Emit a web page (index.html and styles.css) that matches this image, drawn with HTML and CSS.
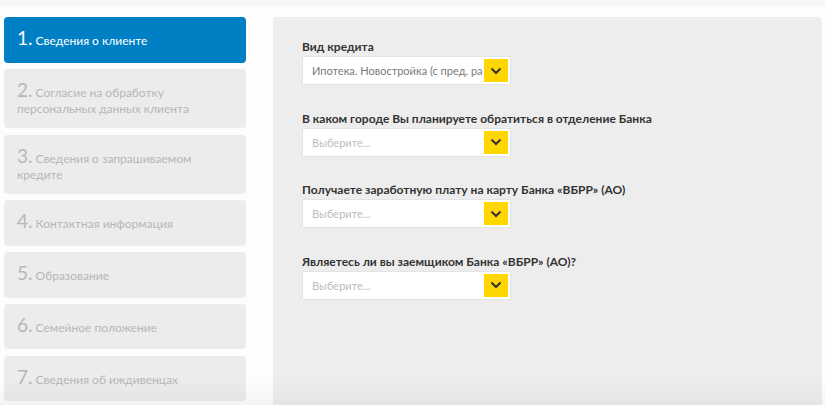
FILE: index.html
```html
<!DOCTYPE html>
<html lang="ru">
<head>
<meta charset="utf-8">
<title>Анкета</title>
<link rel="stylesheet" href="styles.css">
</head>
<body>
<div class="topbar"></div>
<div class="page">
  <nav class="steps">
    <div class="step active"><span class="num">1.</span> Сведения о клиенте</div>
    <div class="step two"><span class="num">2.</span> Согласие на обработку персональных данных клиента</div>
    <div class="step two"><span class="num">3.</span> Сведения о запрашиваемом кредите</div>
    <div class="step"><span class="num">4.</span> Контактная информация</div>
    <div class="step"><span class="num">5.</span> Образование</div>
    <div class="step"><span class="num">6.</span> Семейное положение</div>
    <div class="step"><span class="num">7.</span> Сведения об иждивенцах</div>
  </nav>
  <main class="panel">
    <div class="field">
      <div class="label">Вид кредита</div>
      <div class="select"><span class="value">Ипотека. Новостройка (с пред. расчетами)</span><span class="arrow"><svg width="12" height="8" viewBox="0 0 12 8"><path d="M1.5 1.5 L6 6 L10.5 1.5" fill="none" stroke="#333" stroke-width="2"/></svg></span></div>
    </div>
    <div class="field">
      <div class="label">В каком городе Вы планируете обратиться в отделение Банка</div>
      <div class="select"><span class="value placeholder">Выберите...</span><span class="arrow"><svg width="12" height="8" viewBox="0 0 12 8"><path d="M1.5 1.5 L6 6 L10.5 1.5" fill="none" stroke="#333" stroke-width="2"/></svg></span></div>
    </div>
    <div class="field">
      <div class="label">Получаете заработную плату на карту Банка «ВБРР» (АО)</div>
      <div class="select"><span class="value placeholder">Выберите...</span><span class="arrow"><svg width="12" height="8" viewBox="0 0 12 8"><path d="M1.5 1.5 L6 6 L10.5 1.5" fill="none" stroke="#333" stroke-width="2"/></svg></span></div>
    </div>
    <div class="field">
      <div class="label">Являетесь ли вы заемщиком Банка «ВБРР» (АО)?</div>
      <div class="select"><span class="value placeholder">Выберите...</span><span class="arrow"><svg width="12" height="8" viewBox="0 0 12 8"><path d="M1.5 1.5 L6 6 L10.5 1.5" fill="none" stroke="#333" stroke-width="2"/></svg></span></div>
    </div>
  </main>
</div>
<div class="fade"></div>
</body>
</html>
```
FILE: styles.css
```css
html, body {
  margin: 0;
  padding: 0;
  height: 405px;
  overflow: hidden;
}
body {
  background: #fdfdfd;
  font-family: Lato, "Open Sans", sans-serif;
}
.topbar {
  height: 6px;
  background: #f7f7f7;
}
.page {
  display: flex;
  align-items: flex-start;
  padding: 11px 0 0 4px;
  gap: 27px;
}
.steps {
  width: 242px;
  flex: none;
  display: flex;
  flex-direction: column;
  gap: 6.3px;
}
.step {
  background: #ececec;
  color: #b7b7b7;
  border-radius: 4px;
  font-size: 12px;
  line-height: 16.5px;
  padding: 15px 13px 13px;
}
.step.two {
  padding-bottom: 10.5px;
}
.step .num {
  font-size: 19px;
  line-height: 12px;
}
.step.active {
  background: #0080c4;
  color: #fff;
}
.panel {
  flex: 1;
  background: #ededed;
  border-radius: 4px 4px 0 0;
  margin-right: 3px;
  height: 400px;
  padding: 22px 0 0 29px;
  box-sizing: border-box;
}
.field {
  margin-bottom: 25.5px;
}
.label {
  font-weight: bold;
  font-size: 12px;
  line-height: 16px;
  color: #333;
  margin-bottom: 1px;
}
.select {
  width: 209px;
  height: 29px;
  box-sizing: border-box;
  background: #fff;
  border: 1px solid #e1e5ea;
  position: relative;
  display: flex;
  align-items: center;
  padding: 0 27px 0 9px;
}
.value {
  font-size: 11px;
  color: #7a7a7a;
  white-space: nowrap;
  overflow: hidden;
}
.value.placeholder {
  color: #bdbdbd;
}
.arrow {
  position: absolute;
  right: 2px;
  top: 2px;
  width: 24px;
  height: 23px;
  background: #ffd600;
  display: flex;
  align-items: center;
  justify-content: center;
}
.fade {
  position: fixed;
  left: 0;
  right: 0;
  bottom: 0;
  height: 26px;
  background: linear-gradient(rgba(0,0,0,0), rgba(0,0,0,0.035));
  pointer-events: none;
}
```
